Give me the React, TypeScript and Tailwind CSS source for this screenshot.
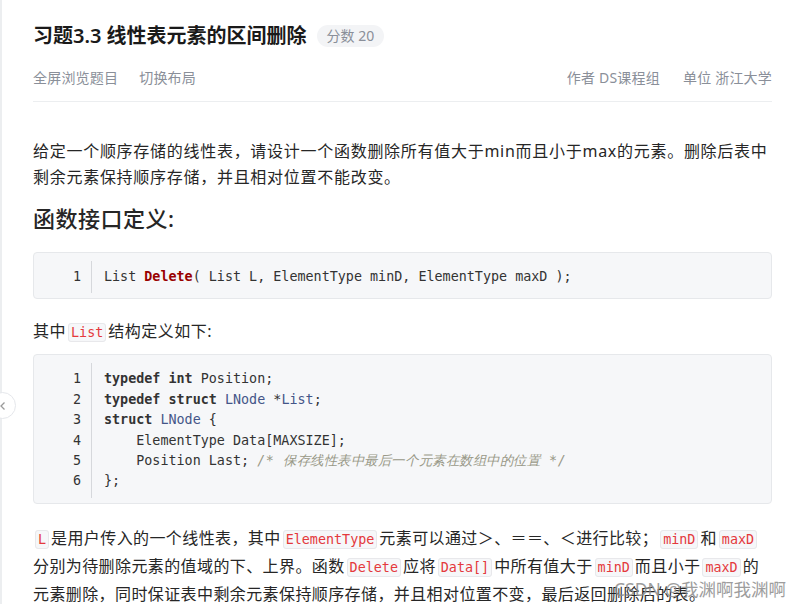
import React from "react";

const sans = { fontFamily: '"Noto Sans", "Noto Sans CJK SC", sans-serif' };

function Code({ children }: { children: React.ReactNode }) {
  return (
    <code className="mx-[2px] rounded-[3px] border border-[#e8e8eb] bg-[#f6f7f9] px-[2px] py-[1px] font-['DejaVu_Sans_Mono',monospace] text-[13.4px] tracking-normal text-[#e4393c]">
      {children}
    </code>
  );
}

function CodeBlock({ lines }: { lines: React.ReactNode[] }) {
  return (
    <div className="flex rounded-[4px] border border-[#e6e8eb] bg-[#f6f7f9] pb-[5px] pt-[8px] font-['DejaVu_Sans_Mono',monospace] text-[13.4px] leading-[20.4px] text-[#333]">
      <div className="w-[58px] shrink-0 border-r border-[#d6d8dc] py-[6px] pr-[10px] text-right">
        {lines.map((_, i) => (
          <div key={i}>{i + 1}</div>
        ))}
      </div>
      <div className="py-[6px] pl-[12px] whitespace-pre">
        {lines.map((l, i) => (
          <div key={i}>{l}</div>
        ))}
      </div>
    </div>
  );
}

const kw = (t: string) => <span className="font-bold text-[#333]">{t}</span>;
const ty = (t: string) => <span className="text-[#445588]">{t}</span>;

export default function App() {
  return (
    <div className="relative h-[604px] w-[801px] overflow-hidden bg-white" style={sans}>
      <div className="absolute left-0 top-0 h-full w-[2px] bg-[#eceef0]" />
      <div className="absolute left-[-11px] top-[392px] flex h-[27px] w-[27px] items-center justify-center rounded-full border border-[#e5e7eb] bg-white">
        <svg width="8" height="12" viewBox="0 0 8 12">
          <path d="M5.5 2.5 L2 6 L5.5 9.5" fill="none" stroke="#9a9a9a" strokeWidth="1.3" />
        </svg>
      </div>

      <div className="ml-[33px] w-[739px]">
        <div className="flex items-center pt-[22px]">
          <h1 className="text-[20px] font-semibold leading-[28px] text-[#1a1a1a]">
            习题3.3 线性表元素的区间删除
          </h1>
          <span className="ml-[10px] rounded-full bg-[#f3f4f6] px-[10px] py-[1px] text-[14px] leading-[20px] text-[#8a8f99]">
            分数 20
          </span>
        </div>

        <div className="mt-[18px] flex items-center justify-between text-[14px] leading-[20px] tracking-[0.2px] text-[#8a8f99]">
          <div className="flex gap-[21px]">
            <span>全屏浏览题目</span>
            <span>切换布局</span>
          </div>
          <div className="flex gap-[23px]">
            <span>作者 DS课程组</span>
            <span>单位 浙江大学</span>
          </div>
        </div>

        <div className="mt-[13px] h-px bg-[#eceef0]" />

        <p className="mt-[36px] text-[16px] leading-[26px] tracking-[0.72px] text-[#262626]">
          给定一个顺序存储的线性表，请设计一个函数删除所有值大于min而且小于max的元素。删除后表中
          <br />
          剩余元素保持顺序存储，并且相对位置不能改变。
        </p>

        <h2 className="mt-[13px] text-[22px] font-medium leading-[30px] tracking-[0.5px] text-[#262626]">
          函数接口定义:
        </h2>

        <div className="mt-[19px]">
          <CodeBlock
            lines={[
              <>
                List <span className="font-bold text-[#990000]">Delete</span>( List L, ElementType minD, ElementType maxD );
              </>,
            ]}
          />
        </div>

        <p className="mt-[19px] text-[16px] leading-[26px] tracking-[0.5px] text-[#262626]">
          其中<Code>List</Code>结构定义如下:
        </p>

        <div className="mt-[8px]">
          <CodeBlock
            lines={[
              <>
                {kw("typedef")} {kw("int")} Position;
              </>,
              <>
                {kw("typedef")} {kw("struct")} {ty("LNode")} *{ty("List")};
              </>,
              <>
                {kw("struct")} {ty("LNode")} {"{"}
              </>,
              <>{"    ElementType Data[MAXSIZE];"}</>,
              <>
                {"    Position Last; "}
                <span className="italic tracking-[0.55px] text-[#999988]">/* 保存线性表中最后一个元素在数组中的位置 */</span>
              </>,
              <>{"};"}</>,
            ]}
          />
        </div>

        <p className="mt-[21px] whitespace-nowrap text-[16px] leading-[26px] tracking-[0.4px] text-[#262626]">
          <Code>L</Code>是用户传入的一个线性表，其中<Code>ElementType</Code>元素可以通过＞、＝＝、＜进行比较；
          <Code>minD</Code>和<Code>maxD</Code>
          <br />
          分别为待删除元素的值域的下、上界。函数<Code>Delete</Code>应将<Code>Data[]</Code>中所有值大于<Code>minD</Code>而且小于<Code>maxD</Code>的
          <br />
          元素删除，同时保证表中剩余元素保持顺序存储，并且相对位置不变，最后返回删除后的表。
        </p>
      </div>

      <div className="pointer-events-none absolute left-[614px] top-[577px] whitespace-nowrap text-[17.5px] leading-[24px] text-[#8c8c8c] opacity-85">
        CSDN @我渊啊我渊啊
      </div>
    </div>
  );
}
